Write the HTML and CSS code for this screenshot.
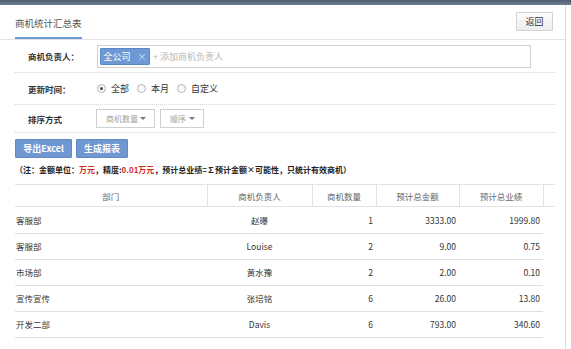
FILE: index.html
```html
<!DOCTYPE html>
<html lang="zh-CN">
<head>
<meta charset="utf-8">
<title>商机统计汇总表</title>
<link rel="stylesheet" href="styles.css">
</head>
<body>
<div class="topbar"></div>
<div class="panel">
  <div class="head">
    <div class="tab">商机统计汇总表</div>
    <button class="back">返回</button>
  </div>
  <div class="form">
    <div class="row r1">
      <span class="lbl">商机负责人：</span>
      <div class="tagbox">
        <span class="tag">全公司<span class="x">×</span></span>
        <span class="ph">+ 添加商机负责人</span>
      </div>
    </div>
    <div class="row r2">
      <span class="lbl">更新时间：</span>
      <div class="radios">
        <span class="opt"><span class="radio on"></span>全部</span>
        <span class="opt"><span class="radio"></span>本月</span>
        <span class="opt"><span class="radio"></span>自定义</span>
      </div>
    </div>
    <div class="row r3">
      <span class="lbl">排序方式</span>
      <div class="sel w1">商机数量<span class="caret"></span></div>
      <div class="sel w2">顺序<span class="caret"></span></div>
    </div>
  </div>
  <div class="actions">
    <button class="btn b1">导出Excel</button>
    <button class="btn b2">生成报表</button>
  </div>
  <p class="note">（注：金额单位：<em>万元</em>，精度:<em>0.01万元</em>，预计总业绩=∑预计金额×可能性，只统计有效商机）</p>
  <table class="thead">
    <colgroup><col class="c1"><col class="c2"><col class="c3"><col class="c4"><col class="c5"><col class="c6"></colgroup>
    <tr><th>部门</th><th>商机负责人</th><th>商机数量</th><th>预计总金额</th><th>预计总业绩</th><th></th></tr>
  </table>
  <table class="tbody">
    <colgroup><col class="c1"><col class="c2"><col class="c3"><col class="c4"><col class="c5"></colgroup>
    <tr><td class="dept">客服部</td><td class="ctr">赵曝</td><td class="num">1</td><td class="num">3333.00</td><td class="num">1999.80</td></tr>
    <tr><td class="dept">客服部</td><td class="ctr">Louise</td><td class="num">2</td><td class="num">9.00</td><td class="num">0.75</td></tr>
    <tr><td class="dept">市场部</td><td class="ctr">黄水豫</td><td class="num">2</td><td class="num">2.00</td><td class="num">0.10</td></tr>
    <tr><td class="dept">宣传宣传</td><td class="ctr">张培铭</td><td class="num">6</td><td class="num">26.00</td><td class="num">13.80</td></tr>
    <tr><td class="dept">开发二部</td><td class="ctr">Davis</td><td class="num">6</td><td class="num">793.00</td><td class="num">340.60</td></tr>
  </table>
</div>
</body>
</html>
```
FILE: styles.css
```css
* { box-sizing: border-box; }
html, body { margin: 0; padding: 0; background: #fff; }
body {
  font-family: "Noto Sans CJK SC", "Noto Sans", sans-serif;
  font-size: 9px;
  color: #333;
  width: 571px;
  height: 349px;
  overflow: hidden;
}
.topbar {
  height: 5px;
  background: linear-gradient(#4e5e70, #6f7e8e);
}
.panel {
  width: 566px;
  height: 344px;
  border-right: 1px solid #dcdcdc;
}
.head {
  height: 35px;
  display: flex;
  justify-content: space-between;
  align-items: flex-start;
  padding: 0 12px 0 15px;
  border-bottom: 1px solid #e4e4e4;
}
.tab {
  height: 34px;
  padding-top: 3px;
  display: flex;
  align-items: center;
  font-size: 9.5px;
  color: #555;
  border-bottom: 2px solid #6c9ad6;
}
.back {
  margin-top: 7px;
  width: 37px;
  height: 19px;
  padding: 0;
  font: inherit;
  font-size: 9px;
  color: #333;
  background: linear-gradient(#fdfdfd, #ededed);
  border: 1px solid #d2d2d2;
  border-radius: 1px;
}
.form { padding: 0 10px 0 15px; }
.row {
  display: flex;
  align-items: center;
  border-bottom: 1px dotted #d6d6d6;
}
.r1 { height: 33px; }
.r2 { height: 32px; }
.r3 { height: 28px; }
.lbl {
  width: 82px;
  padding-left: 13px;
  font-weight: bold;
  color: #333;
  font-size: 8.5px;
}
.tagbox {
  width: 434px;
  height: 23px;
  border: 1px solid #cfcfcf;
  display: flex;
  align-items: center;
  padding-left: 2px;
}
.tag {
  height: 17px;
  width: 50px;
  display: flex;
  align-items: center;
  justify-content: center;
  background: #6d99d5;
  border: 1px solid #5a87c6;
  color: #fff;
  border-radius: 1px;
}
.tag .x { margin-left: 7px; color: #dbe6f5; }
.ph { margin-left: 3px; color: #b8b8b8; }
.radios { display: flex; align-items: center; margin-left: 0; }
.opt {
  display: flex;
  align-items: center;
  margin-right: 8px;
  color: #333;
}
.radio {
  width: 9px;
  height: 9px;
  border: 1px solid #b4b4b4;
  border-radius: 50%;
  background: linear-gradient(#f4f4f4, #fff);
  margin-right: 5px;
  display: flex;
  align-items: center;
  justify-content: center;
}
.radio.on::after {
  content: "";
  width: 3px;
  height: 3px;
  border-radius: 50%;
  background: #444;
}
.sel {
  height: 19px;
  border: 1px solid #d0d0d0;
  display: flex;
  align-items: center;
  padding: 0 8px 0 9px;
  color: #a0a0a0;
  font-size: 8px;
  margin-left: -1px;
}
.sel.w1 { width: 59px; }
.sel.w2 { width: 44px; margin-left: 5px; }
.caret {
  margin-left: auto;
  width: 0;
  height: 0;
  border-left: 3px solid transparent;
  border-right: 3px solid transparent;
  border-top: 3px solid #777;
}
.actions {
  display: flex;
  gap: 4px;
  padding-left: 15px;
  margin-top: 6px;
}
.btn {
  height: 19px;
  padding: 0;
  font: inherit;
  font-size: 9px;
  font-weight: bold;
  color: #fff;
  background: #6f98d3;
  border: 1px solid #6189c6;
  border-radius: 1px;
}
.b1 { width: 57px; }
.b2 { width: 52px; }
.note {
  margin: 6px 0 0 15px;
  height: 12px;
  line-height: 12px;
  font-size: 8px;
  color: #222;
  font-weight: bold;
  white-space: nowrap;
}
.note em { font-style: normal; color: #d42a1e; }
table {
  border-collapse: collapse;
  table-layout: fixed;
  margin-left: 15px;
}
.thead { width: 540px; margin-top: 8px; }
.tbody { width: 528px; }
.c1 { width: 192px; }
.c2 { width: 105px; }
.c3 { width: 64px; }
.c4 { width: 83px; }
.c5 { width: 84px; }
.c6 { width: 12px; }
th {
  height: 22px;
  padding: 0;
  font-weight: normal;
  color: #666;
  font-size: 8.5px;
  border-top: 1px solid #e3e3e3;
  border-bottom: 1px solid #e3e3e3;
  border-left: 1px solid #e3e3e3;
}
th:first-child { border-left: none; }
td {
  height: 26px;
  padding: 0;
  border-bottom: 1px solid #dedede;
  color: #333;
  font-size: 8.5px;
}
td.dept { padding-left: 1px; }
td.ctr { text-align: center; }
td.num { text-align: right; padding-right: 3px; }
```
